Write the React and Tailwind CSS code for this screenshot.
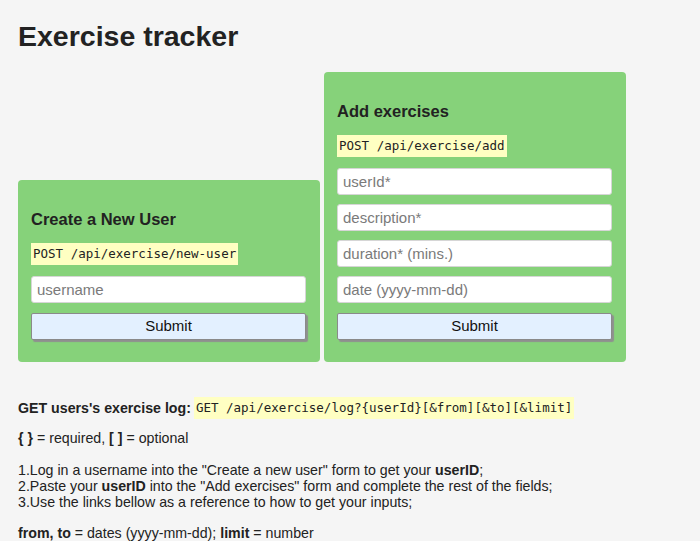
import React from 'react';

const sans = { fontFamily: '"Liberation Sans", Arial, sans-serif' };

const Field = ({ placeholder }) => (
    <input
        placeholder={placeholder}
        className="block w-full h-[27px] bg-white border border-[#d6d6d6] rounded-[3px] px-[5px] text-[15px] text-[#222] placeholder:text-[#7a7a7a] outline-none"
    />
);

const SubmitButton = () => (
    <button
        type="button"
        className="block w-full h-[27px] mt-[10px] bg-[#e3f0ff] border border-[#8a8a8a] rounded-[2px] shadow-[2px_2px_1px_#8f8f8f] text-[15px] text-[#111]"
    >
        Submit
    </button>
);

const Code = ({ children }) => (
    <code className="inline-block align-middle bg-[#ffffc2] px-[2px] py-[3px] leading-[16px] text-[12.5px] text-[#222] font-['DejaVu_Sans_Mono',monospace]">
        {children}
    </code>
);

const Card = ({ title, endpoint, children }) => (
    <div className="w-[302px] bg-[#86d27a] rounded-[4px] pt-[29px] pb-[22px] pl-[13px] pr-[14px]">
        <h3 className="h-[20px] leading-[20px] text-[16.5px] font-bold text-[#222]">{title}</h3>
        <div className="mt-[14px] h-[22px] flex items-center">
            <Code>{endpoint}</Code>
        </div>
        <div className="mt-[11px] flex flex-col gap-[9px]">{children}</div>
        <SubmitButton />
    </div>
);

const App = () => {
    return (
        <div className="min-h-screen bg-[#f5f5f5] text-[#222] px-[18px] pt-[16px]" style={sans}>
            <h1 className="text-[28.5px] leading-[40px] font-bold">Exercise tracker</h1>

            <div className="flex items-end gap-[4px] mt-[16px]">
                <Card title="Create a New User" endpoint="POST /api/exercise/new-user">
                    <Field placeholder="username" />
                </Card>
                <Card title="Add exercises" endpoint="POST /api/exercise/add">
                    <Field placeholder="userId*" />
                    <Field placeholder="description*" />
                    <Field placeholder="duration* (mins.)" />
                    <Field placeholder="date (yyyy-mm-dd)" />
                </Card>
            </div>

            <div className="text-[14.2px] leading-[16px] mt-[34px]">
                <p className="h-[24px] flex items-center">
                    <b>GET users's exercise log:</b>
                    <span className="w-[3px]" />
                    <Code>GET /api/exercise/log?{'{userId}'}[&amp;from][&amp;to][&amp;limit]</Code>
                </p>
                <p className="mt-[10px]">
                    <b>{'{ }'}</b> = required, <b>[ ]</b> = optional
                </p>
                <p className="mt-[16px]">
                    1.Log in a username into the "Create a new user" form to get your <b>userID</b>;
                    <br />
                    2.Paste your <b>userID</b> into the "Add exercises" form and complete the rest of the fields;
                    <br />
                    3.Use the links bellow as a reference to how to get your inputs;
                </p>
                <p className="mt-[15px]">
                    <b>from, to</b> = dates (yyyy-mm-dd); <b>limit</b> = number
                </p>
            </div>
        </div>
    );
};

export default App;
